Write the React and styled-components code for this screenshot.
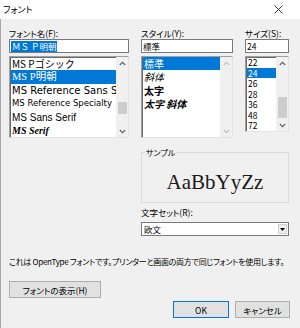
import React from 'react';
import styled, { createGlobalStyle } from 'styled-components';

const Global = createGlobalStyle`
  html, body { margin: 0; padding: 0; background: #f0f0f0; }
  body { font-family: "Noto Sans CJK JP", "Noto Sans", sans-serif; color: #000; }
  * { box-sizing: border-box; }
`;

const Window = styled.div`
  width: 300px;
  height: 328px;
  display: flex;
  flex-direction: column;
  background: #f0f0f0;
  overflow: hidden;
`;

const TitleBar = styled.div`
  height: 19px;
  flex: none;
  background: #fff;
  display: flex;
  align-items: center;
  justify-content: space-between;
  padding: 0 17px 0 3px;
  font-size: 9px;
  font-feature-settings: "palt";
`;

const Body = styled.div`
  flex: 1;
  border-left: 1px solid #a8a8a8;
  padding: 9px 10px 0 8px;
  display: flex;
  flex-direction: column;
`;

const Grid = styled.div`
  display: grid;
  grid-template-columns: 120px 92px 44px;
  column-gap: 12px;
  align-items: start;
`;

const Column = styled.div`
  display: flex;
  flex-direction: column;
`;

const Label = styled.div`
  font-size: 8.5px;
  line-height: 11px;
  height: 11px;
  white-space: nowrap;
  font-feature-settings: "palt";
  color: #000;
`;

const Input = styled.div`
  height: 14px;
  background: #fff;
  border: 1px solid #7a7a7a;
  display: flex;
  align-items: center;
  padding-left: 1px;
  font-size: 8.5px;
  line-height: 12px;
  white-space: nowrap;
  overflow: hidden;
`;

const Selected = styled.span`
  background: #0078d7;
  color: #fff;
  padding: 0 1px;
  line-height: 11px;
`;

const ListBox = styled.div`
  margin-top: 3px;
  height: ${p => p.$h}px;
  background: #fff;
  border: 1px solid;
  border-color: #a0a0a0 #e3e3e3 #e3e3e3 #a0a0a0;
  box-shadow: inset 1px 1px 0 #696969;
  display: flex;
  overflow: hidden;
`;

const Items = styled.div`
  flex: 1;
  min-width: 0;
  padding-left: 1px;
  display: flex;
  flex-direction: column;
`;

const Item = styled.div`
  height: ${p => p.$h}px;
  line-height: ${p => p.$h}px;
  flex: none;
  padding-left: 1px;
  white-space: nowrap;
  overflow: hidden;
  background: ${p => (p.$sel ? '#0078d7' : 'transparent')};
  color: ${p => (p.$sel ? '#fff' : '#000')};
  font-family: ${p => p.$font || '"Noto Sans CJK JP", sans-serif'};
  font-size: ${p => p.$size || 10}px;
  font-weight: ${p => (p.$bold ? 700 : 400)};
  font-style: ${p => (p.$italic ? 'italic' : 'normal')};
`;

const ScrollBar = styled.div`
  width: 12px;
  flex: none;
  background: #f0f0f0;
  display: flex;
  flex-direction: column;
`;

const ArrowBtn = styled.div`
  height: 12px;
  flex: none;
  display: flex;
  align-items: center;
  justify-content: center;
`;

const Track = styled.div`
  flex: 1;
  display: flex;
  flex-direction: column;
  align-items: center;
`;

const Thumb = styled.div`
  width: 9px;
  height: ${p => p.$h}px;
  margin-top: ${p => p.$top}px;
  background: #cdcdcd;
`;

const Chevron = ({ up, color = '#606060' }) => (
  <svg width="7" height="5" viewBox="0 0 7 5">
    <polyline
      points={up ? '0.8,4 3.5,1.3 6.2,4' : '0.8,1 3.5,3.7 6.2,1'}
      fill="none"
      stroke={color}
      strokeWidth="1.1"
    />
  </svg>
);

const Scroll = ({ thumb, disabled }) => {
  const c = disabled ? '#c0c0c0' : '#606060';
  return (
    <ScrollBar>
      <ArrowBtn><Chevron up color={c} /></ArrowBtn>
      <Track>{thumb && <Thumb $top={thumb.top} $h={thumb.h} />}</Track>
      <ArrowBtn><Chevron color={c} /></ArrowBtn>
    </ScrollBar>
  );
};

const Lower = styled(Grid)`
  margin-top: 10px;
`;

const SampleBox = styled.fieldset`
  grid-column: 2 / 4;
  margin: 0;
  padding: 0;
  height: 55px;
  border: 1px solid #dcdcdc;
  display: flex;
  align-items: center;
  justify-content: center;
`;

const Legend = styled.legend`
  margin-left: 3px;
  padding: 0 1px;
  font-size: 8px;
  line-height: 9px;
  font-feature-settings: "palt";
  color: #000;
`;

const SampleText = styled.div`
  font-family: "Liberation Serif", "DejaVu Serif", serif;
  font-size: 21px;
  line-height: 24px;
  color: #1a1a1a;
  margin-top: 4px;
`;

const CharsetCol = styled(Column)`
  grid-column: 2 / 4;
  margin-top: 4px;
`;

const Select = styled.div`
  margin-top: 4px;
  height: 14px;
  background: #fff;
  border: 1px solid #7a7a7a;
  display: flex;
  align-items: center;
  justify-content: space-between;
  padding: 0 1px 0 2px;
  font-size: 8.5px;
`;

const DropBtn = styled.div`
  width: 9px;
  height: 10px;
  display: flex;
  align-items: center;
  justify-content: center;
  background: #f0f0f0;
  border: 1px solid #d0d0d0;
`;

const Description = styled.div`
  margin-top: 20px;
  font-size: 8px;
  line-height: 11px;
  letter-spacing: -0.28px;
  white-space: nowrap;
  font-feature-settings: "palt";
  color: #000;
`;

const Button = styled.button`
  height: 17px;
  width: ${p => p.$w}px;
  padding: 0;
  margin: 0;
  background: #e1e1e1;
  border: 1px solid ${p => (p.$default ? '#0078d7' : '#adadad')};
  font-family: "Noto Sans CJK JP", sans-serif;
  font-size: 8.5px;
  font-feature-settings: "palt";
  color: #000;
  display: flex;
  align-items: center;
  justify-content: center;
`;

const ShowRow = styled.div`
  margin-top: 14px;
  display: flex;
`;

const ButtonRow = styled.div`
  margin-top: 3px;
  display: flex;
  justify-content: flex-end;
  gap: 6px;
`;

const CloseIcon = () => (
  <svg width="9" height="9" viewBox="0 0 9 9">
    <path d="M0.5 0.5 L8.5 8.5 M8.5 0.5 L0.5 8.5" stroke="#222" strokeWidth="0.9" fill="none" />
  </svg>
);

const fonts = [
  { t: 'MS Pゴシック', f: '"Noto Sans CJK JP", sans-serif', s: 10 },
  { t: 'MS P明朝', f: '"Liberation Serif", "Noto Sans CJK JP", serif', s: 10.5, sel: true },
  { t: 'MS Reference Sans Serif', f: '"DejaVu Sans", sans-serif', s: 10 },
  { t: 'MS Reference Specialty', f: '"DejaVu Sans", sans-serif', s: 8.5 },
  { t: 'MS Sans Serif', f: '"Liberation Sans", sans-serif', s: 10 },
  { t: 'MS Serif', f: '"Liberation Serif", serif', s: 10, b: true, i: true },
];

const styles = [
  { t: '標準', sel: true },
  { t: '斜体', i: true },
  { t: '太字', b: true },
  { t: '太字 斜体', b: true, i: true },
];

const sizes = ['22', '24', '26', '28', '36', '48', '72'];

export default function App() {
  return (
    <>
      <Global />
      <Window>
        <TitleBar>
          <span>フォント</span>
          <CloseIcon />
        </TitleBar>
        <Body>
          <Grid>
            <Column>
              <Label>フォント名(F):</Label>
              <Input><Selected>ＭＳ Ｐ明朝</Selected></Input>
              <ListBox $h={82}>
                <Items>
                  {fonts.map(f => (
                    <Item key={f.t} $h={13.4} $font={f.f} $size={f.s} $sel={f.sel} $bold={f.b} $italic={f.i}>
                      {f.t}
                    </Item>
                  ))}
                </Items>
                <Scroll thumb={{ top: 33, h: 12 }} />
              </ListBox>
            </Column>
            <Column>
              <Label>スタイル(Y):</Label>
              <Input>標準</Input>
              <ListBox $h={82}>
                <Items>
                  {styles.map(s => (
                    <Item key={s.t} $h={13.4} $size={10} $sel={s.sel} $bold={s.b} $italic={s.i}>
                      {s.t}
                    </Item>
                  ))}
                </Items>
                <Scroll disabled />
              </ListBox>
            </Column>
            <Column>
              <Label>サイズ(S):</Label>
              <Input>24</Input>
              <ListBox $h={76}>
                <Items>
                  {sizes.map(s => (
                    <Item key={s} $h={10.5} $size={8.5} $sel={s === '24'}>
                      {s}
                    </Item>
                  ))}
                </Items>
                <Scroll thumb={{ top: 28, h: 21 }} />
              </ListBox>
            </Column>
          </Grid>
          <Lower>
            <SampleBox>
              <Legend>サンプル</Legend>
              <SampleText>AaBbYyZz</SampleText>
            </SampleBox>
            <CharsetCol>
              <Label>文字セット(R):</Label>
              <Select>
                <span>欧文</span>
                <DropBtn>
                  <svg width="5" height="3" viewBox="0 0 5 3"><path d="M0 0 H5 L2.5 3 Z" fill="#000" /></svg>
                </DropBtn>
              </Select>
            </CharsetCol>
          </Lower>
          <Description>これは OpenType フォントです。プリンターと画面の両方で同じフォントを使用します。</Description>
          <ShowRow>
            <Button $w={92}>フォントの表示(H)</Button>
          </ShowRow>
          <ButtonRow>
            <Button $w={56} $default>OK</Button>
            <Button $w={55}>キャンセル</Button>
          </ButtonRow>
        </Body>
      </Window>
    </>
  );
}
